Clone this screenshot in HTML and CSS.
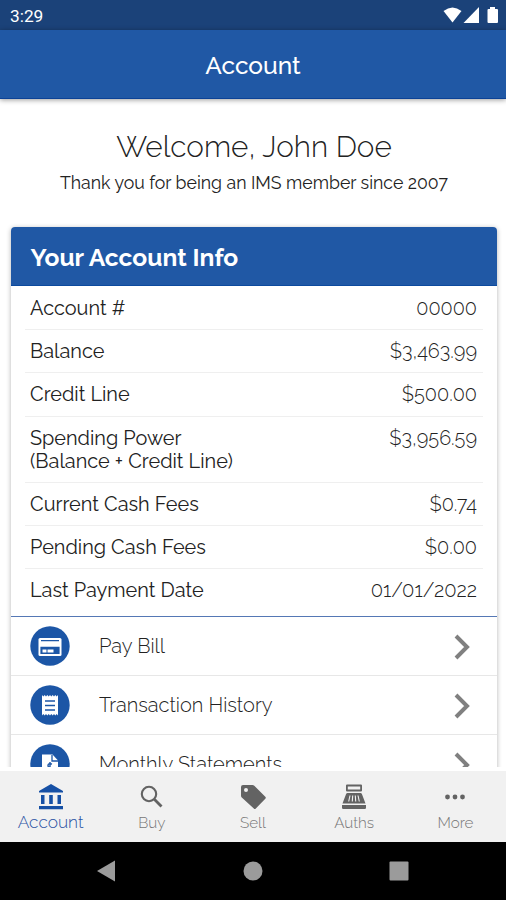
FILE: index.html
```
<!DOCTYPE html>
<html lang="en">
<head>
<meta charset="utf-8">
<title>Account</title>
<link rel="stylesheet" href="styles.css">
</head>
<body>
<div class="status">
  <span class="clock">3:29</span>
  <svg class="status-icons" width="56" height="20" viewBox="0 0 56 20" fill="#fff">
    <path d="M.5 5Q9.500-2 18.500 5L9.500 16.500Z"/>
    <path d="M36 1v16H20.500Z"/>
    <path d="M47 1h5v2h2q1 0 1 1v12q0 1-1 1h-8.500q-1 0-1-1V4q0-1 1-1H47Z"/>
  </svg>
</div>
<header class="appbar">Account</header>
<main class="content">
  <h1>Welcome, John Doe</h1>
  <p class="since">Thank you for being an IMS member since 2007</p>
  <section class="card">
    <h2>Your Account Info</h2>
    <dl class="info">
      <div><dt>Account #</dt><dd>00000</dd></div>
      <div><dt>Balance</dt><dd>$3,463.99</dd></div>
      <div><dt>Credit Line</dt><dd>$500.00</dd></div>
      <div><dt>Spending Power<br>(Balance + Credit Line)</dt><dd>$3,956.59</dd></div>
      <div><dt>Current Cash Fees</dt><dd>$0.74</dd></div>
      <div><dt>Pending Cash Fees</dt><dd>$0.00</dd></div>
      <div><dt>Last Payment Date</dt><dd>01/01/2022</dd></div>
    </dl>
    <ul class="links">
      <li>
        <svg class="badge" viewBox="0 0 40 40"><circle cx="20" cy="20" r="19.700" fill="#1c56a6"/><rect x="8.500" y="12" width="23" height="18" rx="1.500" fill="#fff"/><path d="M11 14.700h18M11 21.300h18v6.200H11z" fill="#1c56a6" stroke="#1c56a6" stroke-width="1.200"/><path d="M12.500 23.500h4v3h-4zM17.500 23.500h6v3h-6z" fill="#fff"/></svg>
        <span>Pay Bill</span>
        <svg class="chevron" viewBox="0 0 16 26"><path d="M2 2l11 11L2 24"/></svg>
      </li>
      <li>
        <svg class="badge" viewBox="0 0 40 40"><circle cx="20" cy="20" r="19.700" fill="#1c56a6"/><path d="M12 10l1.300 1.500L14.700 10l1.300 1.500L17.300 10l1.400 1.500L20 10l1.300 1.500L22.700 10l1.300 1.500L25.300 10l1.400 1.500L28 10v20.500L26.700 29l-1.400 1.500L24 29l-1.300 1.500L21.300 29 20 30.500 18.700 29l-1.400 1.500L16 29l-1.300 1.500L13.300 29 12 30.500z" fill="#fff"/><path d="M15 16h10M15 20.500h10M15 25h10" stroke="#1c56a6" stroke-width="1.500"/></svg>
        <span>Transaction History</span>
        <svg class="chevron" viewBox="0 0 16 26"><path d="M2 2l11 11L2 24"/></svg>
      </li>
      <li>
        <svg class="badge" viewBox="0 0 40 40"><circle cx="20" cy="20" r="19.700" fill="#1c56a6"/><path d="M12 10.500h10.500l5.500 6V31H12z" fill="#fff"/><path d="M22 11v6h6" fill="none" stroke="#1c56a6" stroke-width="1.300"/><path d="M22 20q-4-1-4 1.500t4 2.500-4 3M20 18v11" fill="none" stroke="#1c56a6" stroke-width="1.400"/></svg>
        <span>Monthly Statements</span>
        <svg class="chevron" viewBox="0 0 16 26"><path d="M2 2l11 11L2 24"/></svg>
      </li>
    </ul>
  </section>
</main>
<nav class="tabs">
  <a class="active"><svg viewBox="0 0 28 28"><path d="M14 1l12 7v1.500H2V8zM4 12h3.500v9H4zM12.200 12h3.600v9h-3.600zM20.500 12H24v9h-3.500zM2 23h24v3.200H2z"/></svg><span>Account</span></a>
  <a><svg viewBox="0 0 28 28"><g fill="none" stroke="#636363"><circle cx="11" cy="11" r="7.200" stroke-width="2.100"/><path d="M16.300 16.300l7.200 7.200" stroke-width="2.800"/></g></svg><span>Buy</span></a>
  <a><svg viewBox="0 0 28 28"><path fill-rule="evenodd" d="M4 2h9.500q1 0 1.800.8l11 11q1 1 0 2l-9.500 9.700q-1 1-2 0L2.500 14.300Q2 13.500 2 12.500V4q0-2 2-2zM7 5a2 2 0 100 4 2 2 0 000-4z"/></svg><span>Sell</span></a>
  <a><svg viewBox="0 0 28 28"><path fill-rule="evenodd" d="M7 1.500h14q1 0 1 1v5q0 1-1 1H7q-1 0-1-1v-5q0-1 1-1zM7.800 3.500v3h12.400v-3z"/><path d="M7.500 10h13q1 0 1.400 1l3.600 9.500h-23L6.100 11q.4-1 1.400-1zM2 22h24v2.800q0 1.200-1.200 1.200H3.200Q2 26 2 24.800z"/><path d="M10 12.500l-1.300 6M12.700 12.500l-.4 6M15.300 12.500l.4 6M18 12.500l1.300 6" stroke="#f1f1f1" stroke-width="1.100"/></svg><span>Auths</span></a>
  <a><svg viewBox="0 0 28 28"><circle cx="6.500" cy="14" r="2.400"/><circle cx="14" cy="14" r="2.400"/><circle cx="21.500" cy="14" r="2.400"/></svg><span>More</span></a>
</nav>
<div class="sysnav">
  <svg viewBox="0 0 20 22"><path d="M1 11L19 .5v21z"/></svg>
  <svg viewBox="0 0 20 22"><circle cx="10" cy="11" r="9.500"/></svg>
  <svg viewBox="0 0 20 22"><rect x=".5" y="1.500" width="19" height="19" rx="1"/></svg>
</div>
</body>
</html>
```

FILE: styles.css
```
* { box-sizing: border-box; }
body {
  margin: 0;
  height: 900px;
  display: flex;
  flex-direction: column;
  overflow: hidden;
  background: #fff;
  font-family: Raleway, Lato, sans-serif;
  color: #222;
}
.status {
  height: 30px;
  flex: none;
  display: flex;
  justify-content: space-between;
  align-items: center;
  padding: 2px 7px 0 10px;
  background: #1b4279;
  color: #fff;
}
.clock { font: 400 17.300px/28px Roboto, sans-serif; }
.status-icons { margin-top: -1px; }
.appbar {
  height: 69px;
  flex: none;
  background: #2058a5;
  border-bottom: 1px solid #0c4296;
  box-shadow: 0 1px 5px rgba(0, 0, 0, .4);
  color: #fff;
  font-size: 24.500px;
  font-weight: 500;
  line-height: 72px;
  text-align: center;
  z-index: 1;
}
.content {
  height: 668px;
  flex: none;
  overflow: hidden;
  padding: 28px 9px 0 11px;
}
h1 {
  margin: 0;
  font-size: 29.700px;
  font-weight: 300;
  line-height: 40px;
  text-align: center;
}
.since {
  margin: 5px 0 0;
  font-size: 17.700px;
  line-height: 22px;
  text-align: center;
}
.card {
  margin-top: 33px;
  border-radius: 4px;
  box-shadow: 0 1px 5px rgba(0, 0, 0, .3);
}
h2 {
  margin: 0;
  height: 59px;
  padding-left: 19.500px;
  background: #2058a5;
  border-bottom: 1px solid #0c4a9e;
  border-radius: 4px 4px 0 0;
  color: #fff;
  font-size: 24.600px;
  font-weight: 700;
  line-height: 61px;
}
.info {
  margin: 0;
  padding: 1px 14px 4px;
  border-bottom: 1.500px solid #5578b5;
  font-size: 19.900px;
  line-height: 23.200px;
}
.info div {
  display: flex;
  justify-content: space-between;
  padding: 10px 6px 9px 5px;
  border-bottom: 1px solid #efefef;
}
.info div:last-child { border-bottom: 0; }
.info dd { margin: 0; font-weight: 300; }
.info div:last-child dd { font-size: 20.200px; }
.links { margin: 0; padding: 0; list-style: none; }
.links li {
  height: 59px;
  display: flex;
  align-items: center;
  padding: 0 27px 0 19px;
  border-bottom: 1px solid #e7e7e7;
  font-size: 20px;
  font-weight: 300;
}
.badge { width: 40px; height: 40px; margin-right: 29px; }
.links span { flex: 1; }
.chevron { width: 16px; height: 26px; margin-top: 2px; fill: none; stroke: #808080; stroke-width: 4; }
.tabs {
  height: 71px;
  flex: none;
  margin-top: 4px;
  display: flex;
  background: #f1f1f1;
}
.tabs a {
  flex: 1;
  display: flex;
  flex-direction: column;
  align-items: center;
  padding-top: 12px;
  color: #777;
  font-size: 15.200px;
  font-weight: 300;
  line-height: 24px;
}
.tabs svg { width: 28px; height: 28px; fill: #636363; }
.tabs .active { color: #2e55a5; font-size: 17.300px; line-height: 22px; }
.tabs .active svg { fill: #1650a5; }
.sysnav {
  flex: 1;
  display: flex;
  justify-content: space-between;
  align-items: center;
  padding: 0 97px 0 96px;
  background: #000;
}
.sysnav svg { width: 20px; height: 22px; fill: #9b9b9b; }
```
